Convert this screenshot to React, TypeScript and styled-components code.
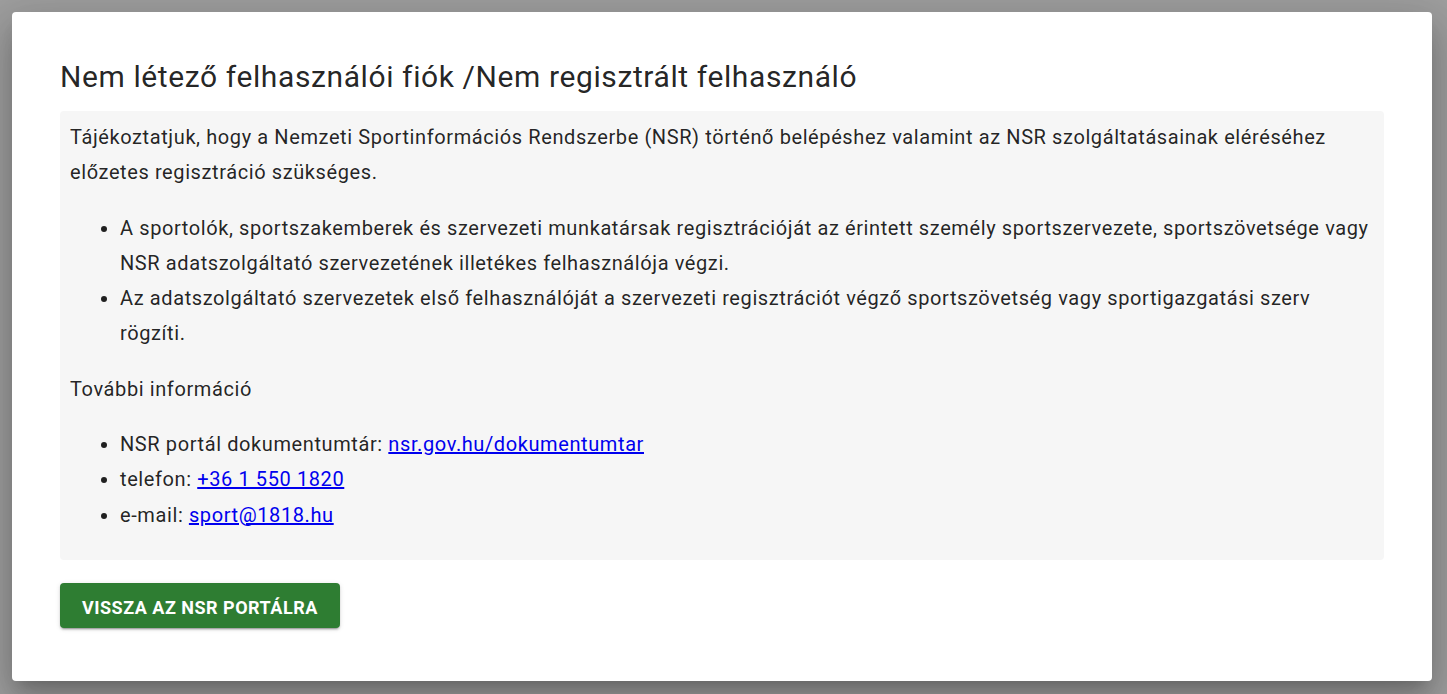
import React from "react";
import styled, { createGlobalStyle } from "styled-components";

const Global = createGlobalStyle`
  html, body { margin: 0; padding: 0; }
  body {
    background: #9e9e9e;
    font-family: Roboto, "Noto Sans", Arial, sans-serif;
    color: rgba(0,0,0,0.87);
  }
`;

const Backdrop = styled.div`
  height: 694px;
  box-sizing: border-box;
  padding: 12px 15px 13px 12px;
  display: flex;
`;

const Card = styled.div`
  flex: 1;
  background: #fff;
  border-radius: 4px;
  box-shadow: 0px 11px 15px -7px rgba(0,0,0,0.2), 0px 24px 38px 3px rgba(0,0,0,0.14), 0px 9px 46px 8px rgba(0,0,0,0.12);
  padding: 45px 48px 0 48px;
  display: flex;
  flex-direction: column;
`;

const Title = styled.h2`
  margin: 0 0 14px 0;
  font-size: 30px;
  font-weight: 400;
  line-height: 40px;
  letter-spacing: 0.6px;
  color: rgba(0,0,0,0.87);
`;

const InfoBox = styled.div`
  background: #f6f6f6;
  border-radius: 4px;
  padding: 9px 10px 7px 10px;
  font-size: 20px;
  line-height: 35.3px;
  letter-spacing: 0.6px;
`;

const Para = styled.p<{ $first?: boolean }>`
  margin: ${(p) => (p.$first ? "0" : "20px")} 0 20px 0;
`;

const List = styled.ul`
  margin: 20px 0;
  padding-left: 50px;
`;

const Link = styled.a`
  color: #0000ee;
  text-decoration: underline;
`;

const Button = styled.button`
  align-self: flex-start;
  margin-top: 23px;
  height: 45px;
  padding: 5px 22px 0 22px;
  background: #2e7d32;
  color: #fff;
  border: none;
  border-radius: 4px;
  font-family: Roboto, Arial, sans-serif;
  font-weight: 700;
  font-size: 18px;
  letter-spacing: 0.5px;
  text-transform: uppercase;
  box-shadow: 0px 3px 1px -2px rgba(0,0,0,0.2), 0px 2px 2px 0px rgba(0,0,0,0.14), 0px 1px 5px 0px rgba(0,0,0,0.12);
  cursor: pointer;
`;

export default function App() {
  return (
    <>
      <Global />
      <Backdrop>
        <Card>
          <Title>Nem létező felhasználói fiók /Nem regisztrált felhasználó</Title>
          <InfoBox>
            <Para $first>
              Tájékoztatjuk, hogy a Nemzeti Sportinformációs Rendszerbe (NSR) történő belépéshez valamint az NSR szolgáltatásainak eléréséhez előzetes regisztráció szükséges.
            </Para>
            <List>
              <li>
                A sportolók, sportszakemberek és szervezeti munkatársak regisztrációját az érintett személy sportszervezete, sportszövetsége vagy NSR adatszolgáltató szervezetének illetékes felhasználója végzi.
              </li>
              <li>
                Az adatszolgáltató szervezetek első felhasználóját a szervezeti regisztrációt végző sportszövetség vagy sportigazgatási szerv rögzíti.
              </li>
            </List>
            <Para>További információ</Para>
            <List>
              <li>
                NSR portál dokumentumtár: <Link href="#">nsr.gov.hu/dokumentumtar</Link>
              </li>
              <li>
                telefon: <Link href="#">+36 1 550 1820</Link>
              </li>
              <li>
                e-mail: <Link href="#">sport@1818.hu</Link>
              </li>
            </List>
          </InfoBox>
          <Button>Vissza az NSR portálra</Button>
        </Card>
      </Backdrop>
    </>
  );
}
